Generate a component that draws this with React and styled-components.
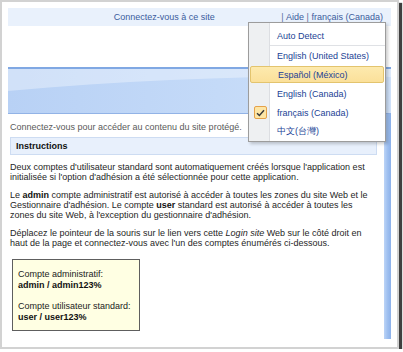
import React from "react"
import styled, { createGlobalStyle } from "styled-components"

const GlobalStyle = createGlobalStyle`
  html, body {
    margin: 0;
    padding: 0;
    background: #fff;
  }
  body {
    font-family: "Liberation Sans", Arial, sans-serif;
    font-size: 9px;
    color: #222;
  }
`

const Frame = styled.div`
  box-sizing: border-box;
  position: relative;
  width: 399px;
  height: 349px;
  border: 2px solid #d2d2d2;
  background: #fff;
  box-shadow: 3px 3px 1px rgba(0, 0, 0, 0.75);
  padding: 6px 6px 8px;
  display: flex;
  flex-direction: column;
`

const TopBar = styled.div`
  height: 18px;
  flex: none;
  background: #e9f1fc;
  display: flex;
  align-items: center;
  justify-content: flex-end;
  padding-right: 8px;
  color: #3b5c9c;
  line-height: 18px;
`

const TopLink = styled.span`
  color: #3b5c9c;
  margin-right: ${(p) => (p.$gap ? p.$gap : 0)}px;
`

const Sep = styled.span`
  margin: 0 2.5px;
  color: #5a6f99;
`

const Spacer = styled.div`
  height: 41px;
  flex: none;
`

const Banner = styled.div`
  position: relative;
  height: 44px;
  flex: none;
  border-top: 2px solid #80a8e3;
  border-bottom: 1px solid #92b3e6;
  background: linear-gradient(90deg, #b8d1f5 0%, #c4daf8 55%, #d0e2fa 100%);
  overflow: hidden;
  svg {
    position: absolute;
    inset: 0;
    width: 100%;
    height: 100%;
  }
`

const Main = styled.div`
  flex: 1;
  display: flex;
  min-height: 0;
`

const Content = styled.div`
  flex: 1;
  padding: 8px 7px 0 2px;
`

const Strip = styled.div`
  width: 7px;
  flex: none;
  background: linear-gradient(90deg, #bcd4f7 0%, #9fc0f0 50%, #8cb1ea 100%);
`

const Lead = styled.div`
  line-height: 10px;
  color: #5a5a5a;
`

const Header = styled.div`
  margin-top: 5px;
  height: 16px;
  line-height: 16px;
  padding-left: 5px;
  background: #e8f0fc;
  border: 1px solid #cddcf2;
  font-weight: bold;
  color: #111;
`

const Para = styled.p`
  margin: ${(p) => (p.$first ? 7 : 8)}px 0 0;
  line-height: 10px;
  color: #262626;
  white-space: nowrap;
  b {
    color: #111;
  }
`

const CredBox = styled.div`
  margin: 11px 0 0 2px;
  width: 121px;
  padding: 9px 0 8px 5px;
  background: #ffffe3;
  border: 1px solid #5e5e5e;
  line-height: 10.5px;
  color: #222;
  display: flex;
  flex-direction: column;
  gap: 11px;
  b {
    color: #111;
  }
`

const Menu = styled.div`
  position: absolute;
  left: 246px;
  top: 20px;
  width: 136px;
  padding: 3px 0 0;
  background: #fff;
  border: 1px solid #9c9c9c;
  box-shadow: 2px 2px 3px rgba(0, 0, 0, 0.2);
  &::before {
    content: "";
    position: absolute;
    left: 0;
    top: 0;
    bottom: 0;
    width: 20px;
    background: #eef0f2;
    border-right: 1px solid #dcdee2;
  }
`

const MenuItem = styled.div`
  position: relative;
  z-index: 1;
  box-sizing: border-box;
  height: ${(p) => (p.$active ? 17 : 19)}px;
  margin: ${(p) => (p.$active ? "1px 1px" : "0")};
  display: flex;
  align-items: center;
  padding-left: ${(p) => (p.$active ? 27 : 28)}px;
  color: #223f95;
  border: ${(p) => (p.$active ? "1px solid #e3c46e" : "none")};
  border-radius: 2px;
  background: ${(p) =>
    p.$active ? "linear-gradient(180deg, #fdeaae 0%, #fbe09a 100%)" : "transparent"};
`

const MenuSep = styled.div`
  position: relative;
  z-index: 1;
  height: 1px;
  margin-left: 21px;
  background: #dfe1e5;
`

const Check = styled.span`
  position: absolute;
  left: 5px;
  top: 3px;
  box-sizing: border-box;
  width: 13px;
  height: 13px;
  border: 1px solid #e5a24a;
  border-radius: 2px;
  background: #fde6a6;
  display: flex;
  align-items: center;
  justify-content: center;
`

const languages = [
  { label: "English (United States)" },
  { label: "Español (México)", active: true },
  { label: "English (Canada)" },
  { label: "français (Canada)", checked: true },
  { label: "中文(台灣)" },
]

export default function App() {
  return (
    <>
      <GlobalStyle />
      <Frame>
        <TopBar>
          <TopLink $gap={64}>Connectez-vous à ce site</TopLink>
          <Sep>|</Sep>
          <TopLink>Aide</TopLink>
          <Sep>|</Sep>
          <TopLink>français (Canada)</TopLink>
        </TopBar>
        <Spacer />
        <Banner>
          <svg viewBox="0 0 383 44" preserveAspectRatio="none">
            <path d="M0 0 H383 V8 C260 6 130 10 0 22 Z" fill="#ffffff" opacity="0.35" />
          </svg>
        </Banner>
        <Main>
          <Content>
            <Lead>Connectez-vous pour accéder au contenu du site protégé.</Lead>
            <Header>Instructions</Header>
            <Para $first>
              Deux comptes d'utilisateur standard sont automatiquement créés lorsque l'application est
              <br />
              initialisée si l'option d'adhésion a été sélectionnée pour cette application.
            </Para>
            <Para>
              Le <b>admin</b> compte administratif est autorisé à accéder à toutes les zones du site Web et le
              <br />
              Gestionnaire d'adhésion. Le compte <b>user</b> standard est autorisé à accéder à toutes les
              <br />
              zones du site Web, à l'exception du gestionnaire d'adhésion.
            </Para>
            <Para>
              Déplacez le pointeur de la souris sur le lien vers cette <i>Login site</i> Web sur le côté droit en
              <br />
              haut de la page et connectez-vous avec l'un des comptes énumérés ci-dessous.
            </Para>
            <CredBox>
              <div>
                Compte administratif:
                <br />
                <b>admin / admin123%</b>
              </div>
              <div>
                Compte utilisateur standard:
                <br />
                <b>user / user123%</b>
              </div>
            </CredBox>
          </Content>
          <Strip />
        </Main>
        <Menu>
          <MenuItem>Auto Detect</MenuItem>
          <MenuSep />
          {languages.map((l) => (
            <MenuItem key={l.label} $active={l.active}>
              {l.checked && (
                <Check>
                  <svg width="9" height="8" viewBox="0 0 9 8">
                    <path d="M1 4.2 L3.4 6.5 L8 1.3" fill="none" stroke="#3a3a3a" strokeWidth="1.5" />
                  </svg>
                </Check>
              )}
              {l.label}
            </MenuItem>
          ))}
        </Menu>
      </Frame>
    </>
  )
}
